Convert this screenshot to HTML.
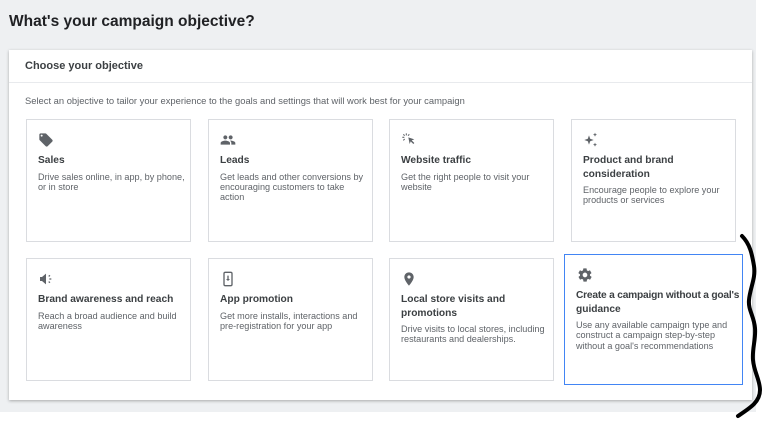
<!DOCTYPE html>
<html><head><style>
*{margin:0;padding:0;box-sizing:border-box}
body{width:768px;height:423px;background:#fff;font-family:"Liberation Sans",Arial,sans-serif;position:relative;overflow:hidden}
.bg{position:absolute;left:0;top:0;width:756px;height:412px;background:#eef0f2}
h1{position:absolute;left:9px;top:13px;font-size:15.5px;font-weight:bold;color:#202124}
.panel{position:absolute;left:9px;top:50px;width:743px;height:350px;background:#fff;box-shadow:0 1px 3px rgba(0,0,0,.3)}
.hdr{position:absolute;left:16px;top:10px;font-size:11px;font-weight:bold;color:#3c4043}
.sep{position:absolute;left:0;top:32px;width:100%;height:1px;background:#e8eaed}
.desc{position:absolute;left:16px;top:45px;font-size:9.4px;color:#5f6368}
.card{position:absolute;width:165px;height:123px;border:1px solid #dadce0;background:#fff}
.card.sel{border:1.5px solid #4285f4}
.ic{position:absolute;left:11px;top:12px;width:16px;height:16px}
.t{position:absolute;left:11px;top:34px;font-size:10.2px;font-weight:bold;color:#3c4043;line-height:13.5px;width:148px}
.d{font-weight:normal;font-size:9.1px;color:#5f6368;line-height:10.3px;margin-top:4px}
</style></head><body>
<div class="bg"></div>
<h1>What's your campaign objective?</h1>
<div class="panel">
<div class="hdr">Choose your objective</div>
<div class="sep"></div>
<div class="desc">Select an objective to tailor your experience to the goals and settings that will work best for your campaign</div>
</div>

<div class="card" style="left:26px;top:119px"><svg class="ic" viewBox="0 0 24 24"><path fill="#5f6368" d="M21.4 11.6l-9-9C12.1 2.2 11.6 2 11 2H4c-1.1 0-2 .9-2 2v7c0 .6.2 1.1.6 1.4l9 9c.4.4.9.6 1.4.6s1-.2 1.4-.6l7-7c.4-.4.6-.9.6-1.4s-.2-1-.6-1.4zM5.5 7C4.7 7 4 6.3 4 5.5S4.7 4 5.5 4 7 4.7 7 5.5 6.3 7 5.5 7z"/></svg><div class="t">Sales<div class="d">Drive sales online, in app, by phone, or in store</div></div></div>
<div class="card" style="left:208px;top:119px"><svg class="ic" viewBox="0 0 24 24"><path fill="#5f6368" d="M16 11c1.7 0 3-1.3 3-3s-1.3-3-3-3-3 1.3-3 3 1.3 3 3 3zm-8 0c1.7 0 3-1.3 3-3S9.7 5 8 5 5 6.3 5 8s1.3 3 3 3zm0 2c-2.3 0-7 1.2-7 3.5V19h14v-2.5c0-2.3-4.7-3.5-7-3.5zm8 0c-.3 0-.6 0-1 .1 1.2.8 2 2 2 3.4V19h6v-2.5c0-2.3-4.7-3.5-7-3.5z"/></svg><div class="t">Leads<div class="d">Get leads and other conversions by encouraging customers to take action</div></div></div>
<div class="card" style="left:389px;top:119px"><svg class="ic" viewBox="0 0 24 24"><path fill="#5f6368" d="M11 8l9 3-4 1.5 4 4-1.5 1.5-4-4L13 18z"/><path stroke="#5f6368" stroke-width="1.6" d="M8 2v3M2 8h3M3.5 3.5l2 2M3.5 12.5l2-2M12.5 3.5l-2 2"/></svg><div class="t">Website traffic<div class="d">Get the right people to visit your website</div></div></div>
<div class="card" style="left:571px;top:119px"><svg class="ic" viewBox="0 0 24 24"><path fill="#5f6368" d="M9 5l1.8 5.2L16 12l-5.2 1.8L9 19l-1.8-5.2L2 12l5.2-1.8zM18 1l.9 2.1L21 4l-2.1.9L18 7l-.9-2.1L15 4l2.1-.9zM18 16l.9 2.1L21 19l-2.1.9L18 22l-.9-2.1L15 19l2.1-.9z"/></svg><div class="t">Product and brand consideration<div class="d">Encourage people to explore your products or services</div></div></div>

<div class="card" style="left:26px;top:258px"><svg class="ic" viewBox="0 0 24 24"><path fill="#5f6368" d="M3 9v6h3l6 5V4L6 9z"/><path stroke="#5f6368" stroke-width="1.8" d="M16 8l2-1.5M16 16l2 1.5M17 12h3"/></svg><div class="t">Brand awareness and reach<div class="d">Reach a broad audience and build awareness</div></div></div>
<div class="card" style="left:208px;top:258px"><svg class="ic" viewBox="0 0 24 24"><rect x="6" y="2" width="12" height="20" rx="2" fill="none" stroke="#5f6368" stroke-width="2"/><path fill="#5f6368" d="M11 7h2v5h2l-3 3-3-3h2z"/></svg><div class="t">App promotion<div class="d">Get more installs, interactions and pre-registration for your app</div></div></div>
<div class="card" style="left:389px;top:258px"><svg class="ic" viewBox="0 0 24 24"><path fill="#5f6368" d="M12 2C8.1 2 5 5.1 5 9c0 5.3 7 13 7 13s7-7.7 7-13c0-3.9-3.1-7-7-7zm0 9.5c-1.4 0-2.5-1.1-2.5-2.5s1.1-2.5 2.5-2.5 2.5 1.1 2.5 2.5-1.1 2.5-2.5 2.5z"/></svg><div class="t">Local store visits and promotions<div class="d">Drive visits to local stores, including restaurants and dealerships.</div></div></div>
<div class="card sel" style="left:564px;top:254px;width:179px;height:131px"><svg class="ic" style="left:12px;top:12px" viewBox="0 0 24 24"><path fill="#5f6368" d="M19.4 13c0-.3.1-.6.1-1s0-.7-.1-1l2.1-1.6c.2-.2.2-.4.1-.6l-2-3.5c-.1-.2-.4-.3-.6-.2l-2.5 1c-.5-.4-1.1-.7-1.7-1l-.4-2.6c0-.3-.2-.4-.5-.4h-4c-.2 0-.5.2-.5.4l-.4 2.6c-.6.3-1.2.6-1.7 1l-2.5-1c-.2-.1-.5 0-.6.2l-2 3.5c-.1.2-.1.5.1.6L4.6 11c0 .3-.1.7-.1 1s0 .7.1 1l-2.1 1.6c-.2.2-.2.4-.1.6l2 3.5c.1.2.4.3.6.2l2.5-1c.5.4 1.1.7 1.7 1l.4 2.6c0 .2.2.4.5.4h4c.2 0 .5-.2.5-.4l.4-2.6c.6-.3 1.2-.6 1.7-1l2.5 1c.2.1.5 0 .6-.2l2-3.5c.1-.2.1-.5-.1-.6zM12 15.5c-1.9 0-3.5-1.6-3.5-3.5s1.6-3.5 3.5-3.5 3.5 1.6 3.5 3.5-1.6 3.5-3.5 3.5z"/></svg><div class="t" style="top:34px;width:165px"><span style="white-space:nowrap;letter-spacing:-0.2px">Create a campaign without a goal's</span><br>guidance<div class="d">Use any available campaign type and construct a campaign step-by-step without a goal's recommendations</div></div></div>

<svg style="position:absolute;left:730px;top:230px" width="38" height="193" viewBox="0 0 38 193"><path d="M12 6 C20 14 22 24 24 36 C26 48 20 58 19 70 C18 80 24 86 25 98 C26 110 22 118 23 130 C24 142 30 150 30 160 C30 172 20 178 8 186" fill="none" stroke="#000" stroke-width="4" stroke-linecap="round"/></svg>
</body></html>
